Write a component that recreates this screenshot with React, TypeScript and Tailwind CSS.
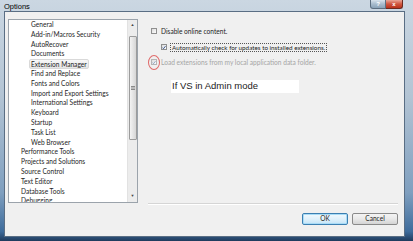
import React from 'react'

const items: [string, boolean][] = [
    ["General", true],
    ["Add-in/Macros Security", true],
    ["AutoRecover", true],
    ["Documents", true],
    ["Extension Manager", true],
    ["Find and Replace", true],
    ["Fonts and Colors", true],
    ["Import and Export Settings", true],
    ["International Settings", true],
    ["Keyboard", true],
    ["Startup", true],
    ["Task List", true],
    ["Web Browser", true],
    ["Performance Tools", false],
    ["Projects and Solutions", false],
    ["Source Control", false],
    ["Text Editor", false],
    ["Database Tools", false],
    ["Debugging", false],
]

const Check = ({checked, dim}: { checked?: boolean; dim?: boolean }) => (
    <div
        className={`w-[6px] h-[6px] border ${dim ? "border-[#b5b5b5]" : "border-[#8f8f8f]"} bg-[linear-gradient(135deg,#dcdcdc,#fdfdfd)] flex items-center justify-center shrink-0`}>
        {checked && (
            <svg width="5" height="5" viewBox="0 0 5 5">
                <path d="M0.6 2.6 L1.9 4 L4.4 0.8" stroke={dim ? "#8aa0c0" : "#2b4a86"} strokeWidth="1.1" fill="none"/>
            </svg>
        )}
    </div>
)

const App = () => {
    return (
        <div
            className="w-[413px] h-[241px] flex flex-col overflow-hidden bg-[linear-gradient(to_bottom,#cbd7e2,#b3c4d4_40%,#7f9fbf_80%,#3e6c9c_96%,#1f3a5c)]"
            style={{fontFamily: '"Liberation Sans", Arial, sans-serif'}}>
            <div className="h-[11px] flex items-start relative">
                <span className="text-[7.5px] leading-none text-black ml-[4px] mt-[3px]">Options</span>
                <div className="ml-auto mr-[10px] flex">
                    <div
                        className="w-[16px] h-[9px] rounded-bl-[3px] border border-t-0 border-[#5d6f80] bg-[linear-gradient(to_bottom,#d8e3ec,#a8bccd_50%,#8aa3b8)] flex items-center justify-center text-[6px] leading-none text-white font-bold">?</div>
                    <div
                        className="w-[17px] h-[9px] rounded-br-[3px] border border-t-0 border-l-0 border-[#6b2a20] bg-[linear-gradient(to_bottom,#e8a597,#d0553e_50%,#b8321c)] flex items-center justify-center text-[6px] leading-none text-white font-bold">x</div>
                </div>
            </div>
            <div className="flex-1 flex ml-[4px] mr-[8px] mb-[8px] border border-[#5a6e84] bg-[#f0f0f0] flex-col">
                <div className="flex flex-1">
                    <div className="ml-[3px] mt-[7px] w-[130px] h-[184px] border border-[#9ba3ab] bg-white flex shrink-0">
                        <div className="flex-1 flex flex-col overflow-hidden text-[6.6px] text-[#1e1e1e]"
                             style={{fontFamily: '"Lato", "Liberation Sans", sans-serif'}}>
                            {items.map(([label, child]) => (
                                <div key={label}
                                     className={`h-[9.8px] shrink-0 flex items-center ${child ? "pl-[22px]" : "pl-[12px]"}`}>
                                    <span
                                        className={label === "Extension Manager" ? "px-[1px] -mx-[2px] rounded-[2px] border border-[#d9d9d9] bg-[linear-gradient(to_bottom,#f8f8f8,#e5e5e5)] leading-[8px]" : "leading-none"}>
                                        {label}
                                    </span>
                                </div>
                            ))}
                        </div>
                        <div className="w-[10px] bg-[#ececec] border-l border-[#e2e2e2] flex flex-col items-center">
                            <div className="h-[11px] flex items-center justify-center text-[4px] leading-none text-[#444]">▲</div>
                            <div
                                className="mt-[5px] w-[8px] h-[104px] rounded-[1px] border border-[#9c9c9c] bg-[linear-gradient(to_right,#f3f3f3,#d6d6d6)] flex items-center justify-center">
                                <div className="w-[4px] h-[4px] border-y border-[#8a8a8a] bg-[#bbb]"/>
                            </div>
                            <div className="mt-auto h-[11px] flex items-center justify-center text-[4px] leading-none text-[#444]">▼</div>
                        </div>
                    </div>
                    <div className="flex-1 flex flex-col pl-[13px] pt-[16px] text-[6.6px]"
                         style={{fontFamily: '"Lato", "Liberation Sans", sans-serif'}}>
                        <div className="flex items-center gap-[4px] h-[7px] text-[#1e1e1e]">
                            <Check/>
                            <span className="leading-none">Disable online content.</span>
                        </div>
                        <div className="flex items-center gap-[3px] h-[9px] mt-[8px] ml-[10px] text-[#1e1e1e]">
                            <Check checked/>
                            <span
                                className="leading-[7px] border border-dotted border-[#555] px-[1px] whitespace-nowrap text-[6.3px]">Automatically check for updates to installed extensions.</span>
                        </div>
                        <div className="flex items-center gap-[4px] h-[7px] mt-[7px] text-[#a5a5a5] relative">
                            <div
                                className="absolute left-[-3px] top-[-4px] w-[12px] h-[15px] rounded-[50%] border border-[#e06a6a]"/>
                            <Check checked dim/>
                            <span className="leading-none">Load extensions from my local application data folder.</span>
                        </div>
                        <div
                            className="mt-[14px] ml-[20px] w-[128px] h-[13px] bg-white flex items-center pl-[1px] text-[9.5px] text-[#222]"
                            style={{fontFamily: '"Liberation Sans", Arial, sans-serif'}}>
                            If VS in Admin mode
                        </div>
                    </div>
                </div>
                <div className="ml-[143px] mr-[6px] h-[2px] border-t border-[#d5d5d5] border-b border-b-white"/>
                <div className="h-[31px] flex items-start justify-end gap-[4px] pr-[6px] pt-[8px] text-[6.6px] text-[#1e1e1e]"
                     style={{fontFamily: '"Lato", "Liberation Sans", sans-serif'}}>
                    <div
                        className="w-[46px] h-[12px] rounded-[2px] border border-[#3c7fb1] bg-[linear-gradient(to_bottom,#f2f9fd,#e0f1fb_50%,#c4e4f7)] flex items-center justify-center shadow-[0_0_0_1px_#a9dcf7_inset]">OK
                    </div>
                    <div
                        className="w-[46px] h-[12px] rounded-[2px] border border-[#8a8a8a] bg-[linear-gradient(to_bottom,#f4f4f4,#e8e8e8_50%,#d4d4d4)] flex items-center justify-center">Cancel
                    </div>
                </div>
            </div>
        </div>
    )
}
export default App
